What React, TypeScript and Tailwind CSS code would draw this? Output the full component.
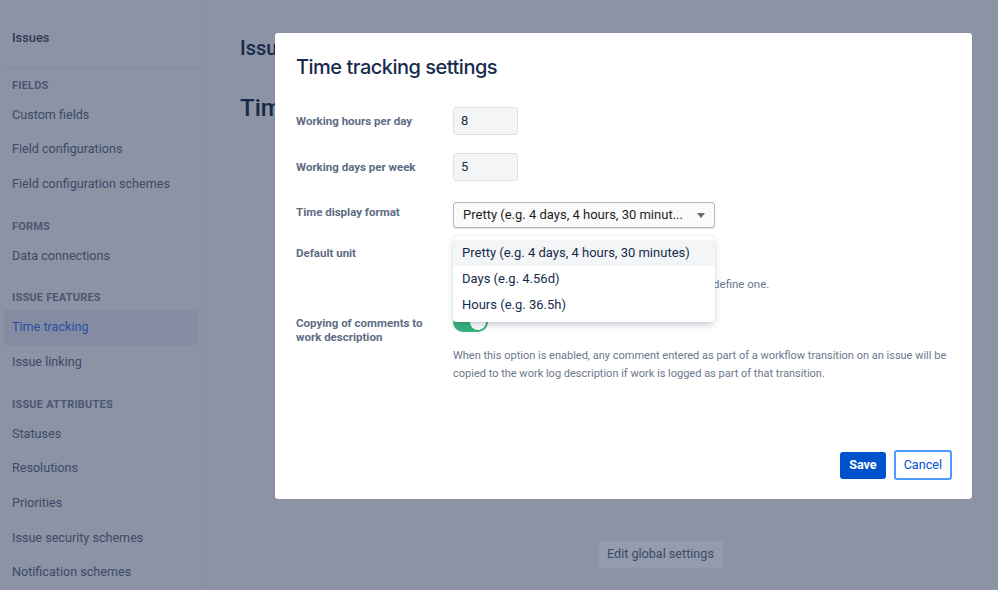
import React from "react";

const font = { fontFamily: "Roboto, 'Noto Sans', sans-serif" };

function NavHeader({ children, first }: { children: React.ReactNode; first?: boolean }) {
  return (
    <div className={`${first ? "pt-[10px]" : "pt-[17px]"} pb-[4px] pl-[8px] text-[11px] leading-[16px] font-bold tracking-[0.2px] text-[#4b5772] uppercase`}>
      {children}
    </div>
  );
}

function NavItem({ children, active }: { children: React.ReactNode; active?: boolean }) {
  return (
    <div
      className={`h-[35px] flex items-center pl-[8px] rounded-[3px] text-[12.6px] ${
        active ? "bg-[#838ca0] text-[#2a4ea6]" : "text-[#3d4a67]"
      }`}
    >
      {children}
    </div>
  );
}

const label = "w-[157px] shrink-0 pr-[22px] text-[11.5px] leading-[14px] font-bold text-[#5e6c84]";

export default function App() {
  return (
    <div className="relative w-[998px] h-[590px] overflow-hidden bg-[#8b93a5] flex" style={font}>
      {/* Sidebar */}
      <aside className="w-[207px] h-full border-r border-[#8690a2] pl-[4px] pr-[8px] flex flex-col">
        <div className="h-[68px] border-b border-[#818a9d] flex items-start pt-[29px] pl-[8px] text-[12.8px] leading-[18px] font-medium text-[#2c3a58]">
          Issues
        </div>
        <NavHeader first>Fields</NavHeader>
        <NavItem>Custom fields</NavItem>
        <NavItem>Field configurations</NavItem>
        <NavItem>Field configuration schemes</NavItem>
        <NavHeader>Forms</NavHeader>
        <NavItem>Data connections</NavItem>
        <NavHeader>Issue features</NavHeader>
        <NavItem active>Time tracking</NavItem>
        <NavItem>Issue linking</NavItem>
        <NavHeader>Issue attributes</NavHeader>
        <NavItem>Statuses</NavItem>
        <NavItem>Resolutions</NavItem>
        <NavItem>Priorities</NavItem>
        <NavItem>Issue security schemes</NavItem>
        <NavItem>Notification schemes</NavItem>
      </aside>

      {/* Main page beneath */}
      <main className="flex-1 pl-[33px] pt-[36px] flex flex-col">
        <div className="text-[20px] leading-[24px] font-medium text-[#18294a]">Issues</div>
        <div className="mt-[34px] text-[24px] leading-[28px] font-medium text-[#18294a]">Time tracking</div>
        <div className="flex-1" />
        <div className="pl-[358px] pb-[22px]">
          <div className="inline-flex items-center h-[27px] px-[9px] rounded-[3px] bg-[#939bad] text-[12.6px] text-[#3d4a67]">
            Edit global settings
          </div>
        </div>
      </main>

      {/* Modal */}
      <div className="absolute left-[275px] top-[33px] w-[697px] h-[466px] bg-white rounded-[3px] shadow-[0_0_1px_rgba(9,30,66,0.3)] flex flex-col pl-[21px] pr-[20px]">
        <h1 className="pt-[20px] text-[20px] leading-[28px] font-medium text-[#172b4d] tracking-[-0.5px]" style={{ fontFamily: "Inter, Roboto, sans-serif" }}>
          Time tracking settings
        </h1>

        <div className="mt-[26px] flex flex-col">
          {/* row 1 */}
          <div className="flex items-center h-[28px]">
            <div className={label}>Working hours per day</div>
            <div className="w-[65px] h-[28px] rounded-[3px] bg-[#f4f5f7] border border-[#dfe1e6] flex items-center pl-[7px] text-[13px] text-[#172b4d]">
              8
            </div>
          </div>
          {/* row 2 */}
          <div className="flex items-center h-[28px] mt-[18px]">
            <div className={label}>Working days per week</div>
            <div className="w-[65px] h-[28px] rounded-[3px] bg-[#f4f5f7] border border-[#dfe1e6] flex items-center pl-[7px] text-[13px] text-[#172b4d]">
              5
            </div>
          </div>
          {/* row 3 */}
          <div className="flex items-start mt-[21px]">
            <div className={`${label} pt-[3px]`}>Time display format</div>
            <div className="w-[262px] h-[26px] rounded-[3px] border border-[#b4b7bd] bg-[#fafafa] shadow-[0_1px_1px_rgba(0,0,0,0.12)] flex items-center pl-[9px] pr-[9px] text-[13px] text-[#1f1f1f]">
              <span className="flex-1 whitespace-nowrap overflow-hidden">Pretty (e.g. 4 days, 4 hours, 30 minut...</span>
              <svg width="8" height="5" viewBox="0 0 8 5" className="ml-[6px]">
                <path d="M0 0 L8 0 L4 5 Z" fill="#6b6b6b" />
              </svg>
            </div>
          </div>
          {/* row 4 */}
          <div className="flex items-start mt-[12px]">
            <div className={`${label} pt-[6px]`}>Default unit</div>
            <div className="flex flex-col">
              <div className="w-[180px] h-[26px] rounded-[3px] border border-[#dfe1e6] bg-[#f4f5f7]" />
              <div className="mt-[10px] text-[11.5px] leading-[16px] text-[#6b778c] whitespace-nowrap">
                Time logged with no unit uses this unit, if you don't define one.
              </div>
            </div>
          </div>
          {/* row 5 */}
          <div className="flex items-start mt-[20px]">
            <div className={`${label} pt-[4px]`}>
              Copying of comments to work description
            </div>
            <div className="flex flex-col">
              <div className="w-[35px] h-[20px] rounded-full bg-[#36b37e] relative">
                <div className="absolute right-[2px] top-[2px] w-[16px] h-[16px] rounded-full bg-white" />
              </div>
              <div className="mt-[15px] w-[502px] text-[11px] leading-[18px] text-[#6b778c]">
                When this option is enabled, any comment entered as part of a workflow transition on an issue will be copied to the work log description if work is logged as part of that transition.
              </div>
            </div>
          </div>
        </div>

        <div className="flex-1" />
        <div className="flex justify-end items-center gap-[8px] pb-[19px]">
          <button className="h-[27px] px-[9px] rounded-[3px] bg-[#0052cc] text-white text-[12.6px] font-bold">Save</button>
          <button className="h-[30px] px-[8px] rounded-[3px] border-2 border-[#4c9aff] bg-white text-[#0052cc] text-[12.6px]">Cancel</button>
        </div>

        {/* Dropdown menu */}
        <div className="absolute left-[178px] top-[203px] w-[262px] py-[4px] bg-white rounded-[3px] shadow-[0_4px_8px_-2px_rgba(9,30,66,0.25),0_0_1px_rgba(9,30,66,0.31)] flex flex-col text-[13px] text-[#172b4d]">
          <div className="h-[26px] flex items-center pl-[9px] bg-[#f4f5f7] whitespace-nowrap">Pretty (e.g. 4 days, 4 hours, 30 minutes)</div>
          <div className="h-[26px] flex items-center pl-[9px]">Days (e.g. 4.56d)</div>
          <div className="h-[26px] flex items-center pl-[9px]">Hours (e.g. 36.5h)</div>
        </div>
      </div>
    </div>
  );
}
